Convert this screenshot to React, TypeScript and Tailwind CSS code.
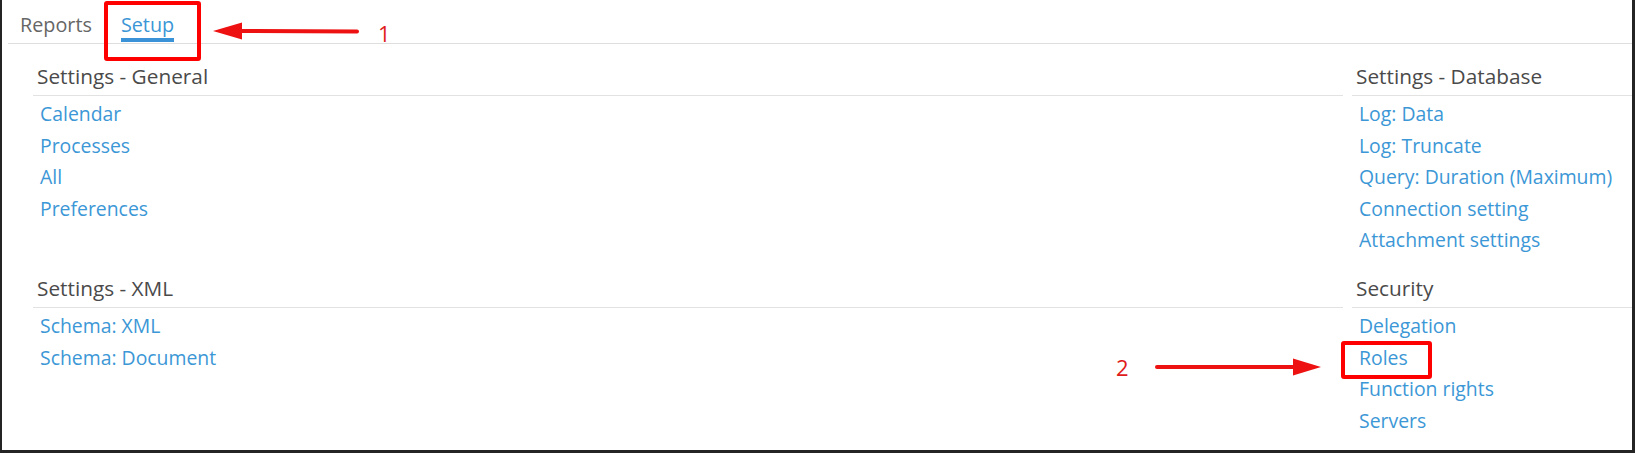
import React from "react";

type SectionProps = { title: string; links: string[] };

function Section({ title, links }: SectionProps) {
  return (
    <div className="mt-[18px]">
      <div className="pl-[4px] pb-[5px] border-b border-[#e2e2e2] text-[20.8px] leading-[28px] text-[#4a4a4a]">
        {title}
      </div>
      <ul className="pt-[2px] pl-[7px] text-[19.4px] leading-[31.6px] text-[#3c97d6]">
        {links.map((l) => (
          <li key={l}>
            <a className="cursor-pointer">{l}</a>
          </li>
        ))}
      </ul>
    </div>
  );
}

export default function App() {
  return (
    <div className="relative w-[1635px] h-[453px] bg-white border-l-2 border-r-[3px] border-b-[3px] border-[#242424] font-['Open_Sans',sans-serif] overflow-hidden">
      {/* Tabs */}
      <div className="ml-[6px] h-[44px] border-b border-[#dedede] flex items-end">
        <div className="pl-[12px] mb-[5px] text-[19.8px] leading-[26px] text-[#666666]">Reports</div>
        <div className="ml-[29px] mb-[1px] text-[19.8px] leading-[26px] text-[#3a96d6] border-b-4 border-[#3a93d6]">
          Setup
        </div>
      </div>

      {/* Content */}
      <div className="pl-[31px] grid grid-cols-[1fr_280px] gap-x-[9px]">
        <Section title="Settings - General" links={["Calendar", "Processes", "All", "Preferences"]} />
        <Section
          title="Settings - Database"
          links={["Log: Data", "Log: Truncate", "Query: Duration (Maximum)", "Connection setting", "Attachment settings"]}
        />
        <Section title="Settings - XML" links={["Schema: XML", "Schema: Document"]} />
        <Section title="Security" links={["Delegation", "Roles", "Function rights", "Servers"]} />
      </div>

      {/* Annotations */}
      <div className="absolute left-[102px] top-[1px] w-[97px] h-[60px] border-4 border-[#ff0000] rounded-[3px]" />
      <svg className="absolute left-[208px] top-[20px]" width="152" height="22" viewBox="0 0 152 22">
        <line x1="28" y1="11" x2="147" y2="11.5" stroke="#ee1111" strokeWidth="4" strokeLinecap="round" />
        <polygon points="3,11 32,2.5 32,19.5" fill="#ee1111" />
      </svg>
      <div className="absolute left-[376px] top-[22px] text-[22px] leading-none text-[#e01b1b]">1</div>

      <div className="absolute left-[1339px] top-[341px] w-[91px] h-[38px] border-4 border-[#ff0000] rounded-[3px]" />
      <svg className="absolute left-[1149px] top-[356px]" width="174" height="22" viewBox="0 0 174 22">
        <line x1="6" y1="11" x2="148" y2="11" stroke="#ee1111" strokeWidth="4" strokeLinecap="round" />
        <polygon points="170,11 142,2.5 142,19.5" fill="#ee1111" />
      </svg>
      <div className="absolute left-[1114px] top-[356px] text-[22px] leading-none text-[#e01b1b]">2</div>
    </div>
  );
}
